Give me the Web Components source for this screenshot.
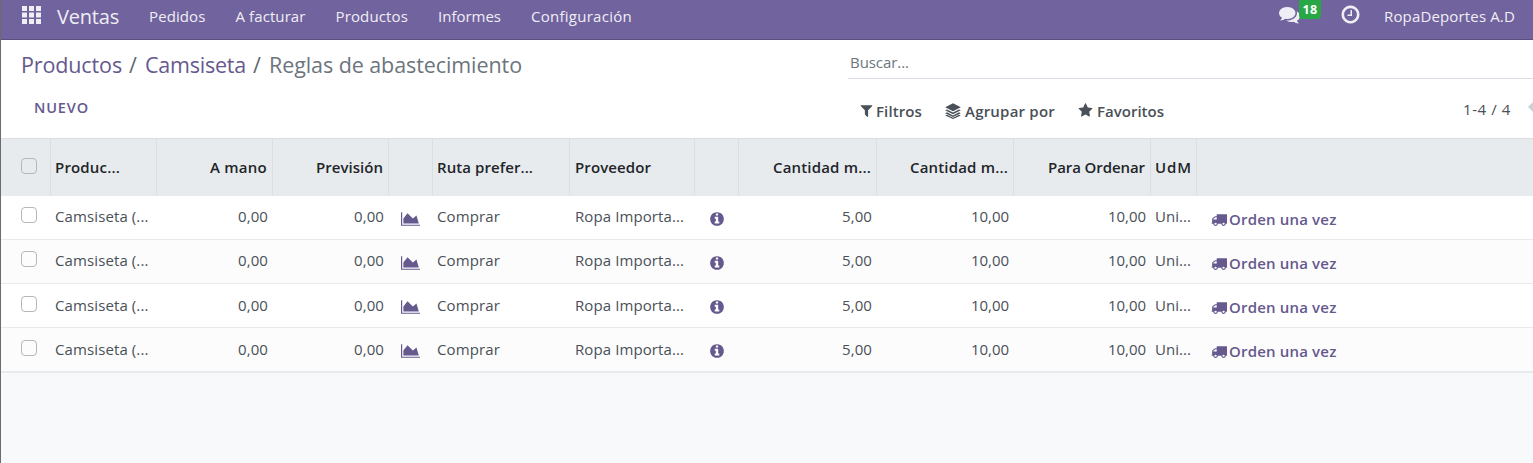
<!DOCTYPE html>
<html lang="es"><head><meta charset="utf-8"><title>Ventas</title>
<style>html,body{margin:0;height:100%;overflow:hidden}body{font-family:"Open Sans","Noto Sans",sans-serif}</style></head>
<body><sales-app></sales-app>
<script>
const ICONS = {
 filter:['0 0 1792 1792','M1595 295q17 41-14 70l-493 493v742q0 42-39 59-13 5-25 5-27 0-45-19l-256-256q-19-19-19-45v-486l-493-493q-31-29-14-70 17-39 59-39h1280q42 0 59 39z'],
 star:['0 0 1792 1792','M1728 647q0 22-26 48l-363 354 86 500q1 7 1 20 0 21-10.5 35.5t-30.5 14.5q-19 0-40-12l-449-236-449 236q-22 12-40 12-21 0-31.5-14.5t-10.5-35.5q0-6 2-20l86-500-364-354q-25-27-25-48 0-37 56-46l502-73 225-455q19-41 49-41t49 41l225 455 502 73q56 9 56 46z'],
 truck:['0 0 1792 1792','M640 1408q0-52-38-90t-90-38-90 38-38 90 38 90 90 38 90-38 38-90zm-384-512h384v-256h-158q-13 0-22 9l-195 195q-9 9-9 22v30zm1280 512q0-52-38-90t-90-38-90 38-38 90 38 90 90 38 90-38 38-90zm256-1088v1024q0 15-4 26.5t-13.5 18.5-16.5 11.5-23.5 6-22.5 2-25.5 0-22.5-.5q0 106-75 181t-181 75-181-75-75-181h-384q0 106-75 181t-181 75-181-75-75-181h-64q-3 0-22.5.5t-25.5 0-22.5-2-23.5-6-16.5-11.5-13.5-18.5-4-26.5q0-26 19-45t45-19v-320q0-8-.5-35t0-38 2.5-34.5 6.5-37 14-30.5 22.5-30l198-198q19-19 50.5-32t58.5-13h160v-192q0-26 19-45t45-19h1024q26 0 45 19t19 45z'],
 info:['0 0 1792 1792','M1152 1376v-160q0-14-9-23t-23-9h-96v-512q0-14-9-23t-23-9h-320q-14 0-23 9t-9 23v160q0 14 9 23t23 9h96v320h-96q-14 0-23 9t-9 23v160q0 14 9 23t23 9h448q14 0 23-9t9-23zm-128-896v-160q0-14-9-23t-23-9h-192q-14 0-23 9t-9 23v160q0 14 9 23t23 9h192q14 0 23-9t9-23zm640 416q0 209-103 385.5t-279.5 279.5-385.5 103-385.5-103-279.5-279.5-103-385.5 103-385.5 279.5-279.5 385.5-103 385.5 103 279.5 279.5 103 385.5z'],
 clock:['0 0 1792 1792','M1024 544v448q0 14-9 23t-23 9h-320q-14 0-23-9t-9-23v-64q0-14 9-23t23-9h224v-352q0-14 9-23t23-9h64q14 0 23 9t9 23zm416 352q0-148-73-273t-198-198-273-73-273 73-198 198-73 273 73 273 198 198 273 73 273-73 198-198 73-273zm224 0q0 209-103 385.5t-279.5 279.5-385.5 103-385.5-103-279.5-279.5-103-385.5 103-385.5 279.5-279.5 385.5-103 385.5 103 279.5 279.5 103 385.5z'],
 comments:['0 0 1792 1792','M1408 768q0 139-94 257t-256.5 186.5-353.5 68.5q-86 0-176-16-124 88-278 128-36 9-86 16h-3q-11 0-20.5-8t-11.5-21q-1-3-1-6.5t.5-6.5 2-6l2.5-5 3.5-5.5 4-5 4.5-5 4-4.5q5-6 23-25t26-29.5 22.5-29 25-38.5 20.5-44q-124-72-195-177t-71-224q0-139 94-257t256.5-186.5 353.5-68.5 353.5 68.5 256.5 186.5 94 257zm384 256q0 120-71 224.5t-195 176.5q10 24 20.5 44t25 38.5 22.5 29 26 29.5 23 25q1 1 4 4.5t4.5 5 4 5 3.5 5.5l2.5 5 2 6 .5 6.5-1 6.5q-3 14-13 22t-22 7q-50-7-86-16-154-40-278-128-90 16-176 16-271 0-472-132 58 4 88 4 161 0 309-45t264-129q125-92 192-212t67-254q0-77-23-152 129 71 204 178t75 230z'],
 chart:['0 0 2048 1792','M2048 1536v128h-2048v-1536h128v1408h1920zm-384-1024l256 896h-1664v-576l448-576 576 576z'],
 layers:['0 0 16 16','M8 .3 15.8 4.2 8 8.2.2 4.2zM2 6.4 8 9.5l6-3.1 1.8.9L8 11.2.2 7.3zM2 9.3l6 3.1 6-3.1 1.8.9L8 14.1.2 10.2zM2 11.7l6 3 6-3 1.8.8L8 16 .2 12.5z'],
 grid:['0 0 19 18','M0 0h5v5H0zM7 0h5v5H7zM14 0h5v5h-5zM0 6.5h5v5H0zM7 6.5h5v5H7zM14 6.5h5v5h-5zM0 13h5v5H0zM7 13h5v5H7zM14 13h5v5h-5z'],
 prev:['0 0 6 12','M6 0v12L0 6z']
};
class UiIcon extends HTMLElement{
 connectedCallback(){
  const [box,d]=ICONS[this.getAttribute('name')],w=this.getAttribute('w'),h=this.getAttribute('h')||w;
  this.attachShadow({mode:'open'}).innerHTML=`<style>:host{display:block;flex:none}svg{display:block}</style><svg width="${w}" height="${h}" viewBox="${box}" fill="currentColor" preserveAspectRatio="none"><path d="${d}"/></svg>`;
 }
}
customElements.define('ui-icon',UiIcon);

/* One-line label whose tracking is adjusted to the advance width given in "w". */
class UiLabel extends HTMLElement{
 connectedCallback(){
  const s=this.attachShadow({mode:'open'});
  s.innerHTML='<style>:host{display:block;flex:none;white-space:pre}span{display:inline-block}</style><span><slot></slot></span>';
  const span=s.querySelector('span'),w=+this.getAttribute('w');
  if(w){
   const n=[...this.textContent].length,diff=w-span.getBoundingClientRect().width;
   span.style.letterSpacing=(diff/n)+'px';
   this.style.width=w+'px';
  }
 }
}
customElements.define('ui-label',UiLabel);

class UiCheck extends HTMLElement{
 connectedCallback(){
  this.attachShadow({mode:'open'}).innerHTML='<style>:host{display:block;box-sizing:border-box;width:16px;height:16px;border:1px solid #b5b7ba;border-radius:4px}</style>';
 }
}
customElements.define('ui-check',UiCheck);

class AppNav extends HTMLElement{
 connectedCallback(){
  this.attachShadow({mode:'open'}).innerHTML=`<style>
  :host{display:flex;box-sizing:border-box;height:40px;background:#71639e;border-bottom:1px solid #5a4f7f;color:#f0eef5;font-size:15px;line-height:32px;padding:0 18px 0 21px}
  .grid{margin:6px 16px 0 0}.brand{font-size:20px;margin-right:30px;line-height:33px}
  nav{display:flex;flex:1}nav ui-label{margin-right:30px}
  .chat{position:relative;margin:4px 40px 0 0}
  .badge{position:absolute;left:20px;top:-7px;width:22px;height:22px;border-radius:4px;background:#28a745;color:#fff;font-size:12.5px;font-weight:700;line-height:25px;display:flex;justify-content:center}
  .clock{margin:4px 23px 0 0}
  </style>
  <ui-icon class="grid" name="grid" w="19" h="18"></ui-icon><ui-label class="brand" w="62">Ventas</ui-label>
  <nav><ui-label w="56.5">Pedidos</ui-label><ui-label w="70">A facturar</ui-label><ui-label w="72.5">Productos</ui-label><ui-label w="63">Informes</ui-label><ui-label w="101">Configuración</ui-label></nav>
  <div class="chat"><ui-icon name="comments" w="21"></ui-icon><div class="badge"><ui-label w="15">18</ui-label></div></div>
  <ui-icon class="clock" name="clock" w="21"></ui-icon><ui-label w="131">RopaDeportes A.D</ui-label>`;
 }
}
customElements.define('app-nav',AppNav);

class ControlPanel extends HTMLElement{
 connectedCallback(){
  this.attachShadow({mode:'open'}).innerHTML=`<style>
  :host{display:grid;grid-template-columns:847px 1fr;height:98px;background:#fff;color:#495057;font-size:15px;overflow:hidden}
  .crumbs{display:flex;font-size:21.5px;line-height:30px;padding:10px 0 0 20px;color:#65598e}.sep{color:#5f6770;margin:0 7px}.now{color:#6c757d}
  .new{margin:15px 0 0 33px;line-height:26px;font-weight:600;font-size:14.5px;color:#65598e}
  .search{height:38px;border-bottom:1px solid #dcdce4;line-height:44px;color:#6c757d;padding-left:2px}
  .tools{display:flex;height:59px;align-items:center;line-height:22px;font-weight:600;padding:2px 0 0 11px;box-sizing:border-box;height:61px;color:#495057}
  .tools ui-icon{margin-right:2px}.tools ui-label{margin-right:23px}.tools .gap{margin-right:4px}
  .pager{display:flex;align-items:center;margin-left:auto;font-weight:400;margin-top:-4px}.tools .pager ui-label{margin-right:17px}.tools .pager ui-icon{color:#cdd0d4;margin:-3px -1px 0 0}
  </style>
  <div><div class="crumbs"><ui-label w="101">Productos</ui-label><ui-label class="sep" w="9">/</ui-label><ui-label w="101">Camsiseta</ui-label><ui-label class="sep" w="9">/</ui-label><ui-label class="now" w="253">Reglas de abastecimiento</ui-label></div>
  <ui-label class="new" w="55">NUEVO</ui-label></div>
  <div><div class="search"><ui-label w="59">Buscar...</ui-label></div>
  <div class="tools"><ui-icon name="filter" w="15"></ui-icon><ui-label w="46">Filtros</ui-label>
  <ui-icon class="gap" name="layers" w="16"></ui-icon><ui-label w="90">Agrupar por</ui-label>
  <ui-icon class="gap" name="star" w="15"></ui-icon><ui-label w="67">Favoritos</ui-label>
  <div class="pager"><ui-label w="48">1-4 / 4</ui-label><ui-icon name="prev" w="6" h="12"></ui-icon></div></div></div>`;
 }
}
customElements.define('control-panel',ControlPanel);

const COLS='grid-template-columns:50px 106px 116px 116px 44px 137px 125px 44px 138px 137px 137px 46px 1fr;';
class RuleHead extends HTMLElement{
 connectedCallback(){
  this.attachShadow({mode:'open'}).innerHTML=`<style>
  :host{display:grid;${COLS}box-sizing:border-box;height:58px;background:#e8ebee;border-top:1px solid #dadee2;border-bottom:1px solid #e8ebee;color:#212529;font-weight:600;font-size:15px;line-height:22px}
  div{box-sizing:border-box;border-right:1px solid #dbdfe3;display:flex;align-items:center;padding:0 5px 1px 4px}div:last-child{border:0}.r{justify-content:flex-end}ui-check{margin:-2px 0 0 16px}
  </style><div><ui-check></ui-check></div><div><ui-label w="65">Produc...</ui-label></div><div class="r"><ui-label w="57">A mano</ui-label></div><div class="r"><ui-label w="67">Previsión</ui-label></div><div></div><div><ui-label w="96">Ruta prefer...</ui-label></div><div style="padding-left:5px"><ui-label w="76">Proveedor</ui-label></div><div></div><div class="r"><ui-label w="98">Cantidad m...</ui-label></div><div class="r"><ui-label w="98">Cantidad m...</ui-label></div><div class="r"><ui-label w="97">Para Ordenar</ui-label></div><div><ui-label w="37">UdM</ui-label></div><div></div>`;
 }
}
customElements.define('rule-head',RuleHead);

class RuleRow extends HTMLElement{
 connectedCallback(){
  this.attachShadow({mode:'open'}).innerHTML=`<style>
  :host{display:grid;${COLS}box-sizing:border-box;height:44px;background:#fff;border-bottom:1px solid #e8eaed;color:#495057;font-size:15px;line-height:22px}
  :host(:nth-of-type(even)){background:#fcfcfc}
  :host(:last-of-type){height:45px;border-bottom:2px solid #e8ebee}
  div{display:flex;align-items:flex-start;padding:9px 5px 0 4px}.r{justify-content:flex-end}
  :host(:nth-of-type(n+3)) div:not(.fix){padding-top:10px}
  ui-check{margin:2px 0 0 16px}.chart{margin:6px 0 0 8px;color:#65598e}.info{margin:6px 0 0 10px;color:#65598e}
  .order{padding:12px 0 0 14px;color:#65598e;font-weight:600;font-size:15px}.truck{margin:4px 2px 0 0}
  </style><div><ui-check></ui-check></div><div><ui-label w="93.5">Camsiseta (...</ui-label></div><div class="r"><ui-label w="30">0,00</ui-label></div><div class="r"><ui-label w="30">0,00</ui-label></div><div class="fix"><ui-icon class="chart" name="chart" w="19" h="16"></ui-icon></div><div><ui-label w="63">Comprar</ui-label></div><div style="padding-left:5px"><ui-label w="109">Ropa Importa...</ui-label></div><div class="fix"><ui-icon class="info" name="info" w="16"></ui-icon></div><div class="r"><ui-label w="30">5,00</ui-label></div><div class="r"><ui-label w="38">10,00</ui-label></div><div class="r"><ui-label w="38">10,00</ui-label></div><div><ui-label w="36">Uni...</ui-label></div><div class="order fix"><ui-icon class="truck" name="truck" w="16" h="15"></ui-icon><ui-label w="107.5">Orden una vez</ui-label></div>`;
 }
}
customElements.define('rule-row',RuleRow);

class SalesApp extends HTMLElement{
 connectedCallback(){
  this.attachShadow({mode:'open'}).innerHTML=`<style>:host{display:block;box-sizing:border-box;height:463px;overflow:hidden;border-left:1px solid #6c6c6c;background:#f8f9fb}</style>
  <app-nav></app-nav><control-panel></control-panel><rule-head></rule-head><rule-row></rule-row><rule-row></rule-row><rule-row></rule-row><rule-row></rule-row>`;
 }
}
customElements.define('sales-app',SalesApp);
</script></body></html>
